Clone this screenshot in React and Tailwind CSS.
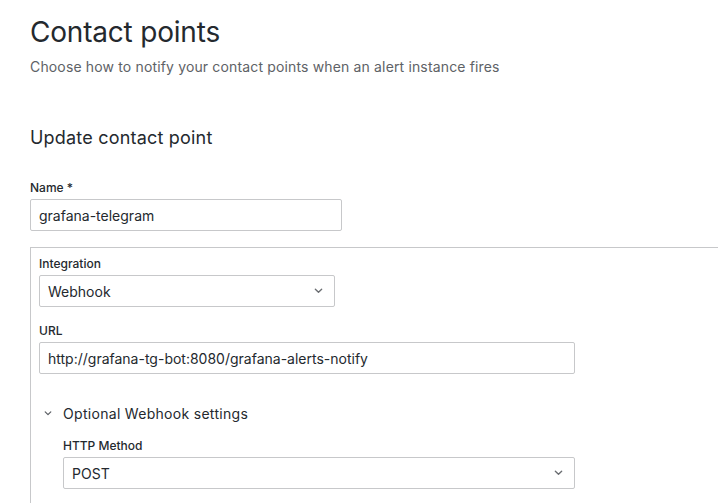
import { useState } from 'react';

function Chevron({ className }) {
  return (
    <svg viewBox="0 0 10 6" className={className} fill="none">
      <polyline points="1.5,1 5,4.5 8.5,1" stroke="currentColor" strokeWidth="1.5" strokeLinecap="round" strokeLinejoin="round" />
    </svg>
  );
}

function Label({ children }) {
  return <div className="text-[12px] leading-[15px] font-medium text-[#24292e] mb-1">{children}</div>;
}

function TextInput({ value, width }) {
  return (
    <div className={`${width} h-[32px] border border-[#c7c8ca] rounded-[2px] bg-white flex items-center px-2 text-[14px] text-[#24292e]`}>
      {value}
    </div>
  );
}

function Select({ value, width }) {
  return (
    <div className={`${width} h-[32px] border border-[#c7c8ca] rounded-[2px] bg-white flex items-center justify-between pl-2 pr-[11px] text-[14px] text-[#24292e]`}>
      <span>{value}</span>
      <Chevron className="w-[9px] h-[6px] text-[#6b6e72]" />
    </div>
  );
}

export default function App() {
  const [open] = useState(true);

  return (
    <div className="w-[718px] h-[503px] overflow-hidden bg-white pl-[30px] pt-[15px] font-['Inter',sans-serif] text-[#24292e]">
      <h1 className="text-[28px] leading-[34px] font-normal tracking-[-0.2px]">Contact points</h1>
      <p className="mt-[8px] text-[14px] leading-[20px] tracking-[0.15px] text-[#5e6266]">
        Choose how to notify your contact points when an alert instance fires
      </p>

      <h3 className="mt-[49px] text-[18px] leading-[24px] font-normal tracking-[0.2px]">Update contact point</h3>

      <div className="mt-[30px]">
        <Label>Name *</Label>
        <TextInput value="grafana-telegram" width="w-[312px]" />
      </div>

      <div className="mt-4 w-[800px] border-l border-t border-[#c7c8ca] pt-2 pl-2 pb-10">
        <Label>Integration</Label>
        <Select value="Webhook" width="w-[296px]" />

        <div className="mt-4">
          <Label>URL</Label>
          <TextInput value="http://grafana-tg-bot:8080/grafana-alerts-notify" width="w-[536px]" />
        </div>

        <div className="mt-[29px] flex items-center h-[20px] pl-[5px]">
          <Chevron className={`w-[8px] h-[5px] text-[#5a5e63] ${open ? '' : '-rotate-90'}`} />
          <span className="ml-[11px] text-[14px] font-normal tracking-[0.3px]">Optional Webhook settings</span>
        </div>

        <div className="mt-[15px] pl-6">
          <Label>HTTP Method</Label>
          <Select value="POST" width="w-[512px]" />
        </div>
      </div>
    </div>
  );
}
